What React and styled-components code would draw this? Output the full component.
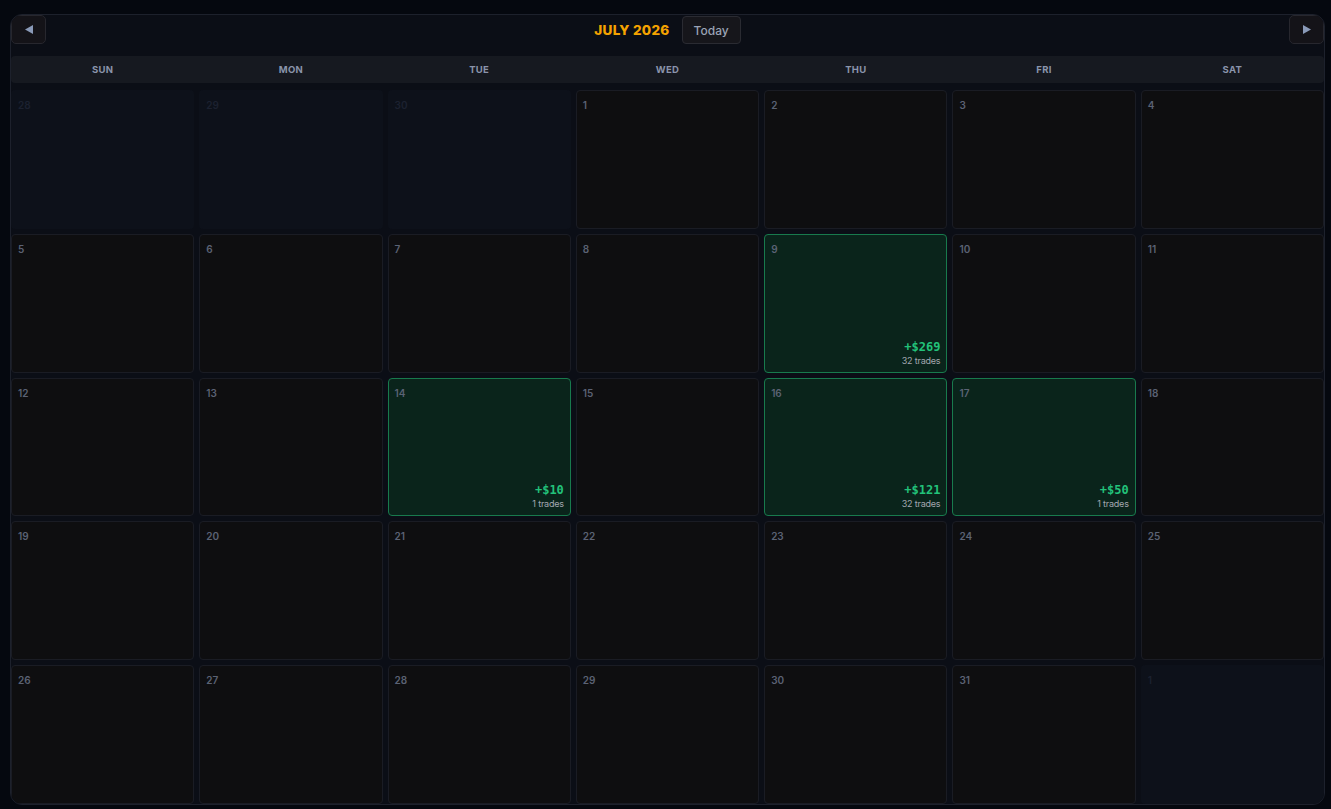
import React from 'react';
import styled, { createGlobalStyle } from 'styled-components';

const GlobalStyle = createGlobalStyle`
  html, body {
    margin: 0;
    background: #05080f;
  }
  body {
    padding: 14px 6px 4px 10px;
    font-family: Inter, "Noto Sans", sans-serif;
  }
`;

const Wrapper = styled.div`
  height: 791px;
  box-sizing: border-box;
  display: flex;
  flex-direction: column;
  background-color: #0b0e16;
  border: 1px solid #1d212c;
  border-radius: 12px;
  overflow: hidden;
`;

const Header = styled.div`
  height: 41px;
  flex-shrink: 0;
  display: flex;
  align-items: flex-start;
  justify-content: space-between;
`;

const NavButton = styled.button`
  width: 35px;
  height: 29px;
  display: flex;
  align-items: center;
  justify-content: center;
  padding: 0;
  background: #141318;
  border: 1px solid #27272e;
  border-radius: 5px;
  color: #8a9ab8;
  cursor: pointer;
`;

const TitleGroup = styled.div`
  display: flex;
  align-items: center;
  gap: 12px;
  padding-top: 1px;
`;

const Title = styled.div`
  color: #f5a300;
  font-size: 13.5px;
  font-weight: 800;
  letter-spacing: 0.3px;
`;

const TodayButton = styled.button`
  height: 28px;
  padding: 0 11px;
  background: #16161b;
  border: 1px solid #2a2b32;
  border-radius: 4px;
  color: #9aa3b5;
  font-family: Inter, sans-serif;
  font-size: 12px;
  font-weight: 500;
`;

const WeekRow = styled.div`
  height: 27px;
  flex-shrink: 0;
  display: grid;
  grid-template-columns: repeat(7, 1fr);
  gap: 5px;
  background: #161920;
  border-radius: 4px;
`;

const WeekDay = styled.div`
  display: flex;
  align-items: center;
  justify-content: center;
  color: #8a94ab;
  font-size: 9.5px;
  font-weight: 700;
  letter-spacing: 0.3px;
`;

const Grid = styled.div`
  flex: 1;
  display: grid;
  grid-template-columns: repeat(7, 1fr);
  grid-template-rows: repeat(5, 1fr);
  gap: 5px;
  margin-top: 7px;
`;

const Cell = styled.div`
  display: flex;
  flex-direction: column;
  justify-content: space-between;
  box-sizing: border-box;
  padding: 8px 6px 6px;
  border-radius: 4px;
  border: 1px solid
    ${({ $outside, $win }) => ($outside ? 'transparent' : $win ? '#187a4d' : '#1a1c24')};
  background: ${({ $outside, $win }) => ($outside ? '#0d111a' : $win ? '#0a241b' : '#0e0e10')};
`;

const DayNum = styled.span`
  font-size: 10px;
  font-weight: 600;
  color: ${({ $outside }) => ($outside ? '#1c2130' : '#5b6274')};
`;

const Stats = styled.div`
  display: flex;
  flex-direction: column;
  align-items: flex-end;
  gap: 1px;
`;

const Amount = styled.span`
  font-family: "DejaVu Sans Mono", "Liberation Mono", monospace;
  font-size: 12px;
  font-weight: 700;
  color: #22c27a;
`;

const Trades = styled.span`
  font-size: 9px;
  color: #a3a7b0;
  letter-spacing: -0.2px;
`;

const Arrow = ({ dir }) => (
  <svg width="10" height="11" viewBox="0 0 10 11">
    {dir === 'left' ? (
      <path d="M1 5.5 L9 1 L9 10 Z" fill="currentColor" />
    ) : (
      <path d="M9 5.5 L1 1 L1 10 Z" fill="currentColor" />
    )}
  </svg>
);

const weekdays = ['SUN', 'MON', 'TUE', 'WED', 'THU', 'FRI', 'SAT'];

const results = {
  9: { amount: '+$269', trades: 32 },
  14: { amount: '+$10', trades: 1 },
  16: { amount: '+$121', trades: 32 },
  17: { amount: '+$50', trades: 1 },
};

const days = [
  ...[28, 29, 30].map((d) => ({ day: d, outside: true })),
  ...Array.from({ length: 31 }, (_, i) => ({ day: i + 1, outside: false })),
  { day: 1, outside: true },
];

const App = () => (
  <>
    <GlobalStyle />
    <Wrapper>
      <Header>
        <NavButton aria-label="Previous month">
          <Arrow dir="left" />
        </NavButton>
        <TitleGroup>
          <Title>JULY 2026</Title>
          <TodayButton>Today</TodayButton>
        </TitleGroup>
        <NavButton aria-label="Next month">
          <Arrow dir="right" />
        </NavButton>
      </Header>
      <WeekRow>
        {weekdays.map((w) => (
          <WeekDay key={w}>{w}</WeekDay>
        ))}
      </WeekRow>
      <Grid>
        {days.map(({ day, outside }, i) => {
          const r = !outside && results[day];
          return (
            <Cell key={i} $outside={outside} $win={!!r}>
              <DayNum $outside={outside}>{day}</DayNum>
              {r && (
                <Stats>
                  <Amount>{r.amount}</Amount>
                  <Trades>{r.trades} trades</Trades>
                </Stats>
              )}
            </Cell>
          );
        })}
      </Grid>
    </Wrapper>
  </>
);

export default App;
